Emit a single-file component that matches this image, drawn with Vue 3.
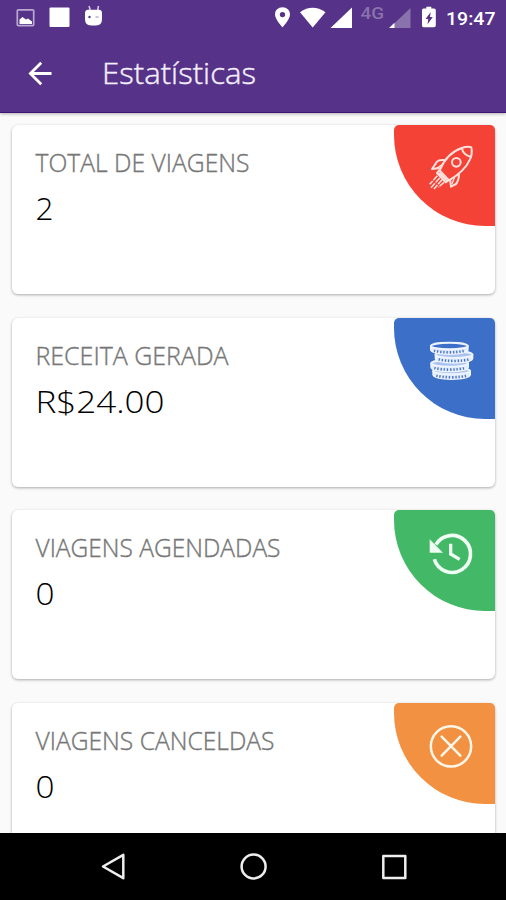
<script setup>
const cards = [
  { label: 'TOTAL DE VIAGENS', labelWidth: 213, value: '2', valueWidth: 18, icon: 'rocket' },
  { label: 'RECEITA GERADA', labelWidth: 192, value: 'R$24.00', valueWidth: 129, icon: 'coins' },
  { label: 'VIAGENS AGENDADAS', labelWidth: 244, value: '0', valueWidth: 19, icon: 'history' },
  { label: 'VIAGENS CANCELDAS', labelWidth: 238, value: '0', valueWidth: 19, icon: 'cancel' },
]
const coins = [
  { x: 153, y: 115 },
  { x: 167, y: 141 },
  { x: 154, y: 167 },
  { x: 160, y: 190 },
].reverse()
</script>

<template>
  <div class="screen">
    <header class="top">
      <svg class="status" viewBox="0 0 506 34">
        <rect x="17.3" y="9.8" width="16.4" height="15.8" rx="1" fill="none" stroke="#b9a8d2" stroke-width="1.7" />
        <path d="M19.500 24v-4.500l3-2.500 3.500 2.500 2-1 4 3V24z" fill="#fff" />
        <rect x="49.500" y="7.500" width="20" height="19.500" rx="1" fill="#fff" />
        <path d="M89 6l1.500 5M98.500 6l-1 5" stroke="#d9cfe8" stroke-width="1.500" />
        <path d="M85 13q0-3 3-3.300h11q3 .3 3 3.300v6q0 6.500-6 6.500h-5q-6 0-6-6.500z" fill="#fff" />
        <circle cx="89.500" cy="17" r="1.200" fill="#563388" />
        <path d="M95.500 17h3" stroke="#aa9ac2" stroke-width="1.200" />
        <path fill="#fff" fill-rule="evenodd" d="M282.500 7.300c-4.300 0-7.500 3.100-7.500 7.200 0 5 7.500 12.800 7.500 12.800s7.500-7.800 7.500-12.800c0-4.100-3.200-7.200-7.500-7.200zm0 4.600a2.700 2.700 0 1 1 0 5.400 2.700 2.700 0 0 1 0-5.400z" />
        <path fill="#fff" d="M300 12.200Q312.500 3.500 325.500 12.200L312.700 27.500z" />
        <path fill="#fff" d="M352 7.500v20.500h-21.500z" />
        <text class="network" x="360.500" y="19" textLength="23.500" lengthAdjust="spacingAndGlyphs">4G</text>
        <path fill="#8a72ad" d="M410.500 8v20h-21z" />
        <path fill="#fff" d="M389 28l5.500-5.300V28z" />
        <path fill="#fff" d="M423.500 8.500h2.800V6.800h5v1.700h2.700q1.800 0 1.800 1.800v15.200q0 1.800-1.800 1.800h-10.500q-1.500 0-1.500-1.800V10.300q0-1.800 1.500-1.800z" />
        <path fill="#563388" d="M430.800 12l-5.300 7h2.800l-.8 5.200 5.300-7.200h-2.900z" />
        <text class="clock" x="446" y="25" textLength="49.500" lengthAdjust="spacingAndGlyphs">19:47</text>
      </svg>
      <div class="toolbar">
        <svg class="back" viewBox="0 0 26 26" fill="none" stroke="#fff" stroke-width="2.800">
          <path d="M25.500 13.500H4.500M15.200 2.700L4.400 13.500l10.800 10.800" />
        </svg>
        <svg class="title" viewBox="0 0 160 40">
          <text x="0" y="31" textLength="154" lengthAdjust="spacingAndGlyphs">Estatísticas</text>
        </svg>
      </div>
    </header>

    <main class="list">
      <section v-for="card in cards" :key="card.label" class="card">
        <svg class="copy" viewBox="0 0 270 130">
          <text class="label" x="-0.500" y="47" :textLength="card.labelWidth + 1" lengthAdjust="spacingAndGlyphs">{{ card.label }}</text>
          <text class="value" x="-0.500" y="95" :textLength="card.valueWidth" lengthAdjust="spacingAndGlyphs">{{ card.value }}</text>
        </svg>
        <div class="badge" :class="card.icon">
          <svg v-if="card.icon === 'rocket'" viewBox="44 30 303 303" fill="none" stroke="#ffe1dd" stroke-width="6" stroke-linejoin="round">
            <path d="M181 166Q202 115 247 99Q266 93 276 97Q280 116 272 133Q256 169 209 196z" />
            <path d="M247 99Q252 119 272 125" />
            <circle cx="231" cy="142" r="13" />
            <path d="M200 136Q180 133 173 140L158 162L181 159M239 175Q239 197 230 207L215 215L212 192" />
            <path d="M190 148L171 161M226 185L218 207" stroke-width="4" />
            <path d="M181 165L173 174L199 202L209 195M180 173L202 196" />
            <path d="M174 182L151 208M181 189L153 220M188 194L164 222M194 202L177 217" stroke-width="4.500" stroke-dasharray="18 3" />
          </svg>
          <svg v-else-if="card.icon === 'coins'" viewBox="42 30 303 303" fill="none" stroke="#edf3ff" stroke-width="6">
            <g v-for="(coin, i) in coins" :key="i" :transform="`translate(${coin.x} ${coin.y})`">
              <path d="M0 -3V10Q2 22 55 23Q108 22 110 10V-3" fill="#dfe9fc" />
              <ellipse cx="55" cy="-1" rx="55" ry="10" :fill="coin.y === 115 ? '#3c6fc7' : '#a9c2ef'" />
              <path d="M9 13Q28 18 55 18Q82 18 101 13" stroke="#4a74c4" stroke-width="8" stroke-dasharray="4 5.500" />
            </g>
          </svg>
          <svg v-else-if="card.icon === 'history'" viewBox="42 30 303 303" fill="none" stroke="#effff3" stroke-width="11">
            <path d="M168 134A55.500 55.500 0 1 1 163 178" />
            <path d="M149 118V158H189z" fill="#effff3" stroke="none" />
            <path d="M212 131V162L239 178" stroke-width="10" />
          </svg>
          <svg v-else viewBox="42 30 303 303" fill="none" stroke="#fff7e9" stroke-width="7.500" stroke-linecap="round">
            <circle cx="213" cy="160" r="60.500" />
            <path d="M185 131L241 188M241 131L185 188" />
          </svg>
        </div>
      </section>
    </main>

    <nav class="navbar">
      <svg viewBox="0 0 506 67" fill="none" stroke="#eee" stroke-width="2.500" stroke-linejoin="round">
        <path d="M123.300 21.800V45.200L103 33.500z" />
        <circle cx="253.600" cy="33.500" r="12" />
        <rect x="383.300" y="23" width="22" height="22" />
      </svg>
    </nav>
  </div>
</template>

<style>
body {
  margin: 0;
}
</style>

<style scoped>
.screen {
  display: flex;
  flex-direction: column;
  width: 506px;
  height: 900px;
  overflow: hidden;
  background: #fafafa;
  font-family: "Open Sans", "Noto Sans", sans-serif;
}
svg {
  display: block;
}
.top {
  flex: none;
  box-sizing: border-box;
  height: 113px;
  background: #563388;
  border-bottom: 1.500px solid #3f1479;
  box-shadow: 0 1px 3px rgba(0, 0, 0, 0.3);
}
.status {
  width: 506px;
  height: 34px;
}
.network {
  font: 500 17px Roboto, sans-serif;
  fill: #8a72ad;
}
.clock {
  font: 500 19px Roboto, sans-serif;
  fill: #fff;
}
.toolbar {
  display: flex;
  align-items: center;
  height: 78px;
  padding-left: 26px;
  gap: 50px;
}
.back {
  width: 26px;
  height: 26px;
}
.title {
  width: 160px;
  height: 40px;
  overflow: visible;
  font-size: 30px;
  font-weight: 300;
  fill: #f4effb;
  stroke: #f4effb;
  stroke-width: 0.4px;
}
.list {
  flex: 1;
  min-height: 0;
  display: flex;
  flex-direction: column;
  gap: 23.700px;
  padding: 12px 11px 0 12px;
  overflow: hidden;
}
.card {
  flex: none;
  display: flex;
  justify-content: space-between;
  height: 169px;
  padding-left: 24px;
  background: #fff;
  border-radius: 6px;
  box-shadow: 0 1px 3px rgba(0, 0, 0, 0.32);
}
.copy {
  width: 270px;
  height: 130px;
  overflow: visible;
}
.label {
  font-size: 26px;
  font-weight: 300;
  fill: #777;
  stroke: #777;
  stroke-width: 0.4px;
}
.value {
  font-size: 32px;
  font-weight: 300;
  fill: #000;
}
.badge {
  width: 101px;
  height: 101px;
  overflow: hidden;
  border-radius: 5px 5px 0 91px;
}
.badge svg {
  width: 101px;
  height: 101px;
}
.rocket {
  background: #f44336;
}
.coins {
  background: #3c6fc7;
}
.history {
  background: #43b866;
}
.cancel {
  background: #f29142;
}
.navbar {
  flex: none;
  height: 67px;
  background: #000;
}
.navbar svg {
  width: 506px;
  height: 67px;
}
</style>
